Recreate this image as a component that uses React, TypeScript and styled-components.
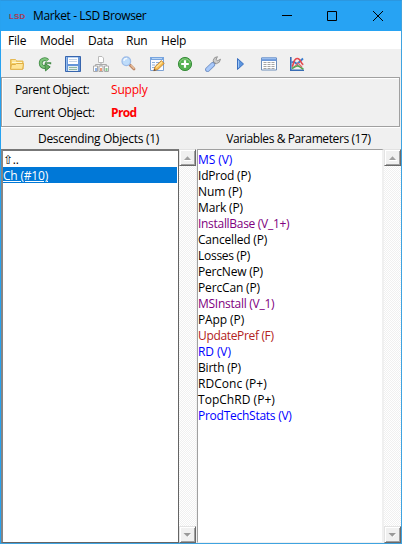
import React from 'react';
import styled, { createGlobalStyle, css } from 'styled-components';

const Global = createGlobalStyle`
  *{box-sizing:border-box}
  html,body{margin:0;padding:0;overflow:hidden}
  body{font-family:"Open Sans","Noto Sans",sans-serif;font-size:12px;color:#000;line-height:16px}
`;

const Window = styled.div`
  width:402px;height:544px;display:flex;flex-direction:column;background:#f0f0f0;
  border:1px solid #3fa3e0;border-top-color:#2b97e0;border-left-color:#27a2f0;
`;
const TitleBar = styled.header`
  height:30px;flex:none;background:#27a3f3;display:flex;align-items:center;padding-left:8px;
`;
const Logo = styled.span`
  width:16px;height:9px;font:bold 8px/9px "Liberation Sans",sans-serif;color:#a83a52;
  letter-spacing:0.1px;
`;
const Label = styled.span<{ $ls?: number; $color?: string; $bold?: boolean }>`
  white-space:pre;letter-spacing:${p => p.$ls ?? -0.2}px;
  ${p => p.$color && css`color:${p.$color};`}
  ${p => p.$bold && css`font-weight:700;`}
`;
const Title = styled(Label)`flex:1;padding-left:8px;`;
const Caption = styled.svg`display:block;flex:none;`;
const MenuBar = styled.nav`
  height:18px;flex:none;background:#fff;display:grid;align-items:center;padding:2px 0 0 7px;
  grid-template-columns:32px 48px 38px 35px 40px;
`;
const ToolBar = styled.div`
  height:28px;flex:none;display:flex;align-items:center;gap:12px;padding:2px 0 0 8px;
`;
const Icon = styled.svg`width:16px;height:16px;flex:none;display:block;`;
const Info = styled.section`
  height:50px;flex:none;margin-right:1px;border:1px solid #a0a0a0;
  box-shadow:inset 1px 1px #fff,0 1px #fff;
  display:grid;grid-template-rows:23px 23px;grid-template-columns:97px 1fr;padding:0 0 0 12px;align-items:center;
`;
const FirstLabel = styled(Label)`padding-left:1px;`;
const Panes = styled.main`flex:1;min-height:0;display:grid;grid-template-columns:195px 205px;`;
const Pane = styled.section`display:flex;flex-direction:column;min-width:0;`;
const Heading = styled.h2`
  height:22px;flex:none;margin:0;padding-top:2px;font-size:12px;font-weight:400;line-height:20px;text-align:center;
`;
const Body = styled.div`flex:1;display:flex;min-height:0;`;
const List = styled.ul<{ $focus?: boolean }>`
  flex:1;margin:0;list-style:none;background:#fff;min-width:0;
  ${p => p.$focus
    ? css`padding:0;border:1px solid #646464;border-left:2px solid #858585;border-top:2px solid #777;`
    : css`margin-left:1px;padding:1px 0 0;border:1px solid #a0a0a0;border-right:2px solid #f0f0f0;border-bottom-color:#f0f0f0;`}
`;
const Item = styled.li<{ $color?: string; $selected?: boolean }>`
  height:16px;line-height:17px;color:${p => p.$color ?? '#000'};
  ${p => p.$selected && css`background:#0078d7;color:#fff;margin-right:1px;text-decoration:underline;`}
`;
const Track = styled.div`
  width:17px;flex:none;display:flex;flex-direction:column;justify-content:space-between;
  background:repeating-conic-gradient(#f0f0f0 0 25%,#fff 0 50%) 0 0/2px 2px;
`;
const Arrow = styled.button`
  width:17px;height:17px;padding:0;background:#f0f0f0;display:grid;place-items:center;
  border:1px solid;border-color:#e3e3e3 #696969 #696969 #e3e3e3;
  box-shadow:inset 1px 1px #fff,inset -1px -1px #a0a0a0;
`;

const Scroll = () => (
  <Track>
    <Arrow aria-label="Up"><svg width="9" height="6"><path d="M1 5 4.5 1.3 8 5z" fill="#a0a0a0"/><path d="M1 5.5h8" stroke="#fff"/></svg></Arrow>
    <Arrow aria-label="Down"><svg width="9" height="6"><path d="M1.5 1.5h7L5 5.4z" fill="#fff"/><path d="M.5 1h7.5L4.3 4.8z" fill="#999"/></svg></Arrow>
  </Track>
);

const icons: Record<string, React.ReactNode> = {
  Open: <><path d="M1.5 13V3.5h5l1 1.5h6.5v8z" fill="#f4cf67" stroke="#e5b954"/><path d="M3 5h4M3 6.5h10" stroke="#fff8d0"/><path d="m1.5 13.3 1-4.8h4l1-1h7l-.8 5.8z" fill="#ffe596" stroke="#dfae43"/></>,
  Reload: <><path d="M10.7 4.5C8 1.8 3.7 3.6 3.7 7.2c0 2.7 2 4 4.7 3.8" fill="none" stroke="#438b46" strokeWidth="3.8"/><path d="M8 7h5.5v1.2" fill="none" stroke="#438b46" strokeWidth="1.4"/><path d="M10.7 4.5C8 1.8 3.7 3.6 3.7 7.2c0 2.7 2 4 4.7 3.8" fill="none" stroke="#7ec47b" strokeWidth="2.2"/><path d="m8 7.5 5.2 3.4-4.7 4z" fill="#65ab61" stroke="#438b46"/></>,
  Save: <><path d="M.5.5h15v15h-15z" fill="#6595d8" stroke="#3765ad"/><path d="M3 1h10v7H3z" fill="#fff"/><path d="M3 1.5h10" stroke="#b6d1f4"/><path d="M4 3.5h8M4 5.5h8" stroke="#c5d4e6"/><path d="M3 10h10v5H3z" fill="#e5eef0"/><path d="M4 11.5h8M4 13.5h8" stroke="#8db7a2"/><path d="M1.5 1v14" stroke="#96bdf0"/></>,
  Structure: <><path d="M8 5v4M2.5 10V8.5h11V10M8 8v3" fill="none" stroke="#aaa"/><path d="M5.5.5H9L10.5 2v4.5h-5z" fill="#fff" stroke="#bbb"/><g fill="#fff" stroke="#aaa"><path d="M.5 10h4v5.5h-4zM6 10h4v5.5H6zM11.5 10h4v5.5h-4z"/></g><path d="M2 12h2v3H2z" fill="#8fb2e8"/><path d="M7 12h2v3H7z" fill="#ed9b75"/><path d="M12.5 12h2v3h-2z" fill="#87cc91"/></>,
  Find: <><path d="m9 9 4 4" stroke="#ba8565" strokeWidth="2.8" strokeLinecap="round"/><path d="m9.7 9.1 3.6 3.6" stroke="#ecc19d" strokeWidth="1.3"/><circle cx="5.3" cy="5.3" r="4.3" fill="#bedcfa" stroke="#9dbce8" strokeWidth="1.3"/><path d="M3 5c.1-2 1.5-2.8 3.2-2.5" fill="none" stroke="#f3faff" strokeWidth="1.4"/></>,
  Edit: <><path d="M1.5 1.5h13v13h-13z" fill="#f8fbff" stroke="#7da2d4"/><path d="M1 1h14v3H1z" fill="#78a5df"/><path d="M3 2.5h10" stroke="#b8d5f5"/><path d="M3 6.5h3m1 0h3m1 0h2M3 9h3m1 0h3M3 11.5h3" stroke="#8eafd8"/><path d="m4.8 14.8 1.1-4 6.5-6.2 2.8 2.9-6.4 6z" fill="#f7bb4c" stroke="#b5762c" strokeWidth=".8"/><path d="m7.2 11.5 5.9-5.5" stroke="#ffe398" strokeWidth="1.3"/><path d="m4.6 15 .8-2.3 1.5 1.5z" fill="#5c4a3e"/></>,
  Add: <><circle cx="8" cy="8" r="6.6" fill="#55b252" stroke="#3b8d3d"/><path d="M2.7 7a5.5 5.5 0 0 1 10.6 0" fill="none" stroke="#8dcc83"/><path d="M8 4.2v7.6M4.2 8h7.6" stroke="#fff" strokeWidth="2.2"/></>,
  Options: <><path d="m7 9 3.8-3.8" stroke="#858585" strokeWidth="3.5"/><path d="M12.5.7 9.7 1.6 8.2 4.2l.7 2.4 2.6 1.1 2.8-1.5 1.2-3-2.8 1.5-1.7-1.2z" fill="#ccc" stroke="#888" strokeWidth=".8"/><path d="m2.6 13.5 5-4.8" stroke="#7896c8" strokeWidth="5" strokeLinecap="round"/><path d="m2.6 13.5 5-4.8" stroke="#a9c9fa" strokeWidth="3.2" strokeLinecap="round"/></>,
  Run: <><path d="M4.5 2.5 10.5 8l-6 5.5z" fill="#5c96df" stroke="#3a6fc0"/><path d="M5.5 4.5v7" stroke="#9dc5f5"/></>,
  Data: <><path d="M.5 2v12h15V2z" fill="#fff" stroke="#6c8db9"/><path d="M.5 1.5h15V5H.5z" fill="#6c98d9"/><path d="M1 2.7h14" stroke="#a5c6f2"/><path d="M2.5 6.5h3m1 0h3m1 0h3m-11 2h3m1 0h3m1 0h3m-11 2h3m1 0h3m1 0h3m-11 2h3m1 0h3m1 0h3" stroke="#a5a5a5"/></>,
  Plot: <><path d="M1.8 1v13.2H15" fill="none" stroke="#386cb4" strokeWidth="1.6"/><path d="m3 12.5 2.8-1.8c1.8-1 3.7-1 5.2.2l3.3 2.3" fill="none" stroke="#56a652" strokeWidth="1.7"/><path d="m2.5 6.5 2.3-.8L8.2 8l5.8-5.5" fill="none" stroke="#397ed0" strokeWidth="1.8"/><path d="M3 10.5C5 9.5 3.7 2.5 8.5 2.5c3.5 0 2.8 5 5.8 6.2" fill="none" stroke="#e5484d" strokeWidth="1.7"/><path d="m6 10 3-3 4 4" fill="none" stroke="#e5686d" strokeWidth="1.1"/></>,
};

const BLUE = '#0000ff', PURPLE = '#800080', BROWN = '#b22222';
const variables: { text: string; color?: string; ls?: number }[] = [
  { text: 'MS (V)', color: BLUE, ls: -0.1 },
  { text: 'IdProd (P)' },
  { text: 'Num (P)', ls: -0.1 },
  { text: 'Mark (P)', ls: -0.15 },
  { text: 'InstallBase (V_1+)', color: PURPLE, ls: -0.3 },
  { text: 'Cancelled (P)' },
  { text: 'Losses (P)', ls: -0.27 },
  { text: 'PercNew (P)' },
  { text: 'PercCan (P)', ls: -0.15 },
  { text: 'MSInstall (V_1)', color: PURPLE, ls: -0.26 },
  { text: 'PApp (P)', ls: -0.1 },
  { text: 'UpdatePref (F)', color: BROWN, ls: -0.34 },
  { text: 'RD (V)', color: BLUE, ls: -0.1 },
  { text: 'Birth (P)', ls: -0.2 },
  { text: 'RDConc (P+)', ls: 0.05 },
  { text: 'TopChRD (P+)', ls: 0.03 },
  { text: 'ProdTechStats (V)', color: BLUE, ls: -0.26 },
];

export default function App() {
  return (
    <Window>
      <Global />
      <TitleBar>
        <Logo>LSD</Logo>
        <Title $ls={-0.38}>Market - LSD Browser</Title>
        <Caption width="121" height="20" fill="none" stroke="#000">
          <path d="M2 9.5h10M47.5 5.5h9v9h-9zM93 5l10 10M103 5 93 15" />
        </Caption>
      </TitleBar>
      <MenuBar>
        {['File', 'Model', 'Data', 'Run', 'Help'].map(m => <Label key={m}>{m}</Label>)}
      </MenuBar>
      <ToolBar>
        {Object.entries(icons).map(([name, art]) => (
          <Icon key={name} viewBox="0 0 16 16" fill="none" aria-label={name}>{art}</Icon>
        ))}
      </ToolBar>
      <Info>
        <FirstLabel $ls={-0.4}>Parent Object:</FirstLabel><Label $color="#f00">Supply</Label>
        <Label $ls={-0.35}>Current Object:</Label><Label $color="#f00" $bold $ls={-0.6}>Prod</Label>
      </Info>
      <Panes>
        <Pane>
          <Heading><Label $ls={-0.3}>Descending Objects (1)</Label></Heading>
          <Body>
            <List $focus>
              <Item><Label>⇧..</Label></Item>
              <Item $selected><Label>Ch (#10)</Label></Item>
            </List>
            <Scroll />
          </Body>
        </Pane>
        <Pane>
          <Heading><Label $ls={-0.4}>Variables &amp; Parameters (17)</Label></Heading>
          <Body>
            <List>
              {variables.map(v => (
                <Item key={v.text} $color={v.color}><Label $ls={v.ls}>{v.text}</Label></Item>
              ))}
            </List>
            <Scroll />
          </Body>
        </Pane>
      </Panes>
    </Window>
  );
}
